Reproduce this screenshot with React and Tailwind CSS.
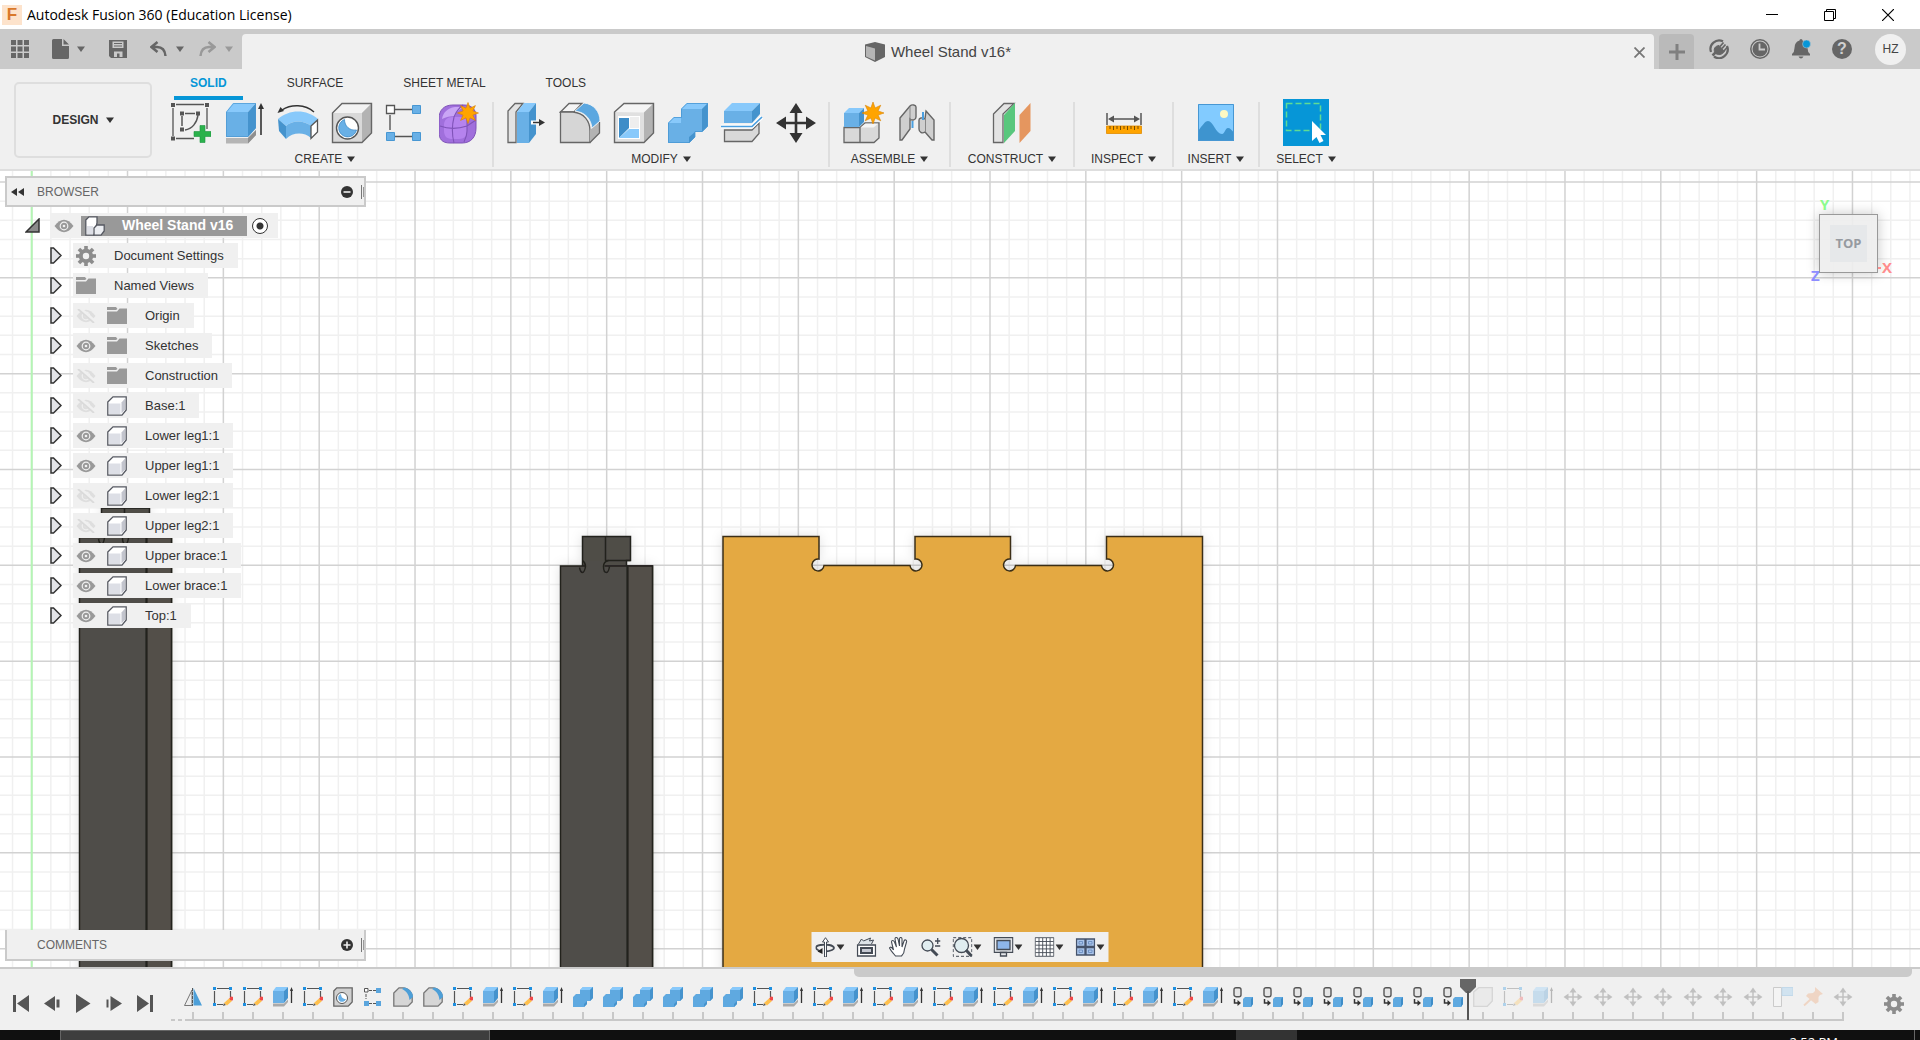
import React from "react";

/* ---------- shared shapes ---------- */

function Caret({ className = "text-[#333]" }) {
  return (
    <svg width="8" height="6" viewBox="0 0 8 6" className={className} aria-hidden="true">
      <path d="M0 0.5h8L4 6z" fill="currentColor" />
    </svg>
  );
}

function Star({ cx, cy, r }) {
  const points = Array.from({ length: 16 }, (_, i) => {
    const a = (i * Math.PI) / 8 - Math.PI / 2;
    const d = i % 2 ? r * 0.5 : r;
    return `${cx + d * Math.cos(a)},${cy + d * Math.sin(a)}`;
  }).join(" ");
  return <polygon points={points} fill="#ffa400" stroke="#d98200" strokeWidth="0.6" />;
}

function Big({ children }) {
  return (
    <svg width="42" height="42" viewBox="0 0 42 42" fill="none" aria-hidden="true">
      {children}
    </svg>
  );
}

/* ---------- ribbon icons ---------- */

const SketchIcon = () => (
  <Big>
    <path d="M4 6v28M7 2.5h28M38 6v21M7 36.5h18" stroke="#555" strokeWidth="1.3" />
    <path d="M13 14v10M16 11.5h10M29 13c-1 8-6 14-13 15" stroke="#555" strokeWidth="1.5" />
    <path d="M2 1h4v4H2zM36 1h4v4h-4zM2 34.5h4v4H2zM11 9.5h4v4h-4zM27 9.5h4v4h-4zM11 25.5h4v4h-4z" fill="#555" />
    <path d="M31 23.5h5v6h6v5h-6v6h-5v-6h-6v-5h6z" fill="#2bb24c" stroke="#1d9440" strokeWidth="0.6" />
  </Big>
);

const ExtrudeIcon = () => (
  <Big>
    <path d="M3 36h22l8-8v5l-8 8.5H3z" fill="#b5b5b5" />
    <path d="M25 36l8-8v5l-8 8.5z" fill="#8f8f8f" />
    <path d="M3 10h22v25H3z" fill="#69b0e6" />
    <path d="M3 10l7-9h23l-8 9z" fill="#88c9fb" />
    <path d="M25 10l8-9v25l-8 9z" fill="#4593cd" />
    <path d="M3.500 10l7-8.500h22V26L25 34.500H3.500z" stroke="#4b97d0" strokeWidth="0.7" />
    <path d="M38 33V6" stroke="#333" strokeWidth="1.6" />
    <path d="M38 1l3 6h-6z" fill="#333" />
  </Big>
);

const RevolveIcon = () => (
  <Big>
    <path d="M5 8C14 2 28 2 37 10" stroke="#333" strokeWidth="1.5" />
    <path d="M0.500 11l3-6 3.500 4z" fill="#333" />
    <path d="M1 17C12 7 30 7 41 17l-7 7C27 18 15 18 9 24z" fill="#88c9fb" />
    <path d="M1 17l8 7v13l-7-8z" fill="#4593cd" />
    <path d="M9 24c6-6 18-6 25 0v12c-7-6-18-6-25 1z" fill="#69b0e6" />
    <path d="M34 24l6.500-6v12L34 36.500z" fill="#fff" stroke="#555" strokeWidth="1.3" />
  </Big>
);

const HoleIcon = () => (
  <Big>
    <path d="M1.500 11L11 1.500h29.500V31L31 40.500H1.500z" fill="#d9d9d9" />
    <path d="M2 11L11 2h29l-9 9z" fill="#f3f3f3" />
    <path d="M31 11l9-9v29l-9 9z" fill="#b3b3b3" />
    <path d="M1.500 11L11 1.500h29.500V31L31 40.500H1.500z" stroke="#666" strokeWidth="1.4" />
    <circle cx="16.5" cy="26" r="11" fill="#fff" stroke="#555" strokeWidth="1.4" />
    <path d="M13.500 17.500a9 9 0 1 0 12 10.500c-7 1-12-4-12-10.500z" fill="#69b0e6" stroke="#3d8ac6" strokeWidth="0.8" />
  </Big>
);

const PatternIcon = () => (
  <Big>
    <path d="M9 7.500h18M5 13v15M9 34.500h18" stroke="#555" strokeWidth="1.4" />
    <path d="M1.500 3.500h8v8h-8z" fill="#fff" stroke="#555" strokeWidth="1.3" />
    <path d="M27.500 3.500h8v8h-8zM1.500 30.500h8v8h-8zM27.500 30.500h8v8h-8z" fill="#69b0e6" stroke="#4797d3" />
  </Big>
);

const FormIcon = () => (
  <Big>
    <path d="M0 17C0 8 5 3 14 3h11c7 0 12 4 12 11v12c0 9-5 15-14 15H11C3 41 0 37 0 30z" fill="#a06fdc" stroke="#7f53b8" />
    <path d="M3 17c1-6 5-11 13-12h9c-6 3-8 6-9 9-5 0-9 1-13 3z" fill="#c9a5f5" />
    <path d="M5 28c0 7 3 9 9 9h6c5 0 8-3 8-8V20c0-4-3-5-7-5h-7c-6 0-9 3-9 8z" fill="#b583ee" />
    <path d="M1 24c8 3 18 3 27 0l9-6M15 15c-2 8-2 18 0 26M28 15v14c0 4-1 7-3 11M15 15c2-5 5-9 9-12" stroke="#7f53b8" strokeWidth="1.1" />
    <Star cx={29} cy={11} r={10.5} />
  </Big>
);

const PressPullIcon = () => (
  <Big>
    <path d="M3 9l7-7.500h8L11 10v30.500H3z" fill="#e3e3e3" stroke="#666" strokeWidth="1.3" />
    <path d="M12 10h12v31H12z" fill="#69b0e6" />
    <path d="M12 10l7-9h12l-7 9z" fill="#88c9fb" />
    <path d="M24 10l7-9v31l-7 9z" fill="#4593cd" />
    <path d="M26 20.500h9" stroke="#fff" strokeWidth="4" />
    <path d="M28 20.500h7" stroke="#333" strokeWidth="1.5" />
    <path d="M40 20.500l-6-3.500v7z" fill="#333" />
  </Big>
);

const FilletIcon = () => (
  <Big>
    <path d="M1.500 10L10 1.500h13L15 10z" fill="#f5f5f5" stroke="#666" strokeWidth="1.3" />
    <path d="M1.500 10H14c11 1 17 9 17 19v11.500H1.500z" fill="#d6d6d6" stroke="#666" strokeWidth="1.3" />
    <path d="M31 28l9.500-8v11L31 40.500z" fill="#b3b3b3" />
    <path d="M40.500 20v11L31 40.500" stroke="#666" strokeWidth="1.3" />
    <path d="M16 9l9-8c10 1 16 9 16 18l-8 7c-1-9-7-16-17-17z" fill="#5ba7e0" stroke="#f5f5f5" strokeWidth="0.8" />
  </Big>
);

const ShellIcon = () => (
  <Big>
    <path d="M1.500 10L11 1.500h29.500V31L31 40.500H1.500z" fill="#e0e0e0" />
    <path d="M2 10l9-8h29l-9 8.500z" fill="#f5f5f5" />
    <path d="M31 10.500L40 2v29l-9 9z" fill="#b3b3b3" />
    <path d="M1.500 10L11 1.500h29.500V31L31 40.500H1.500z" stroke="#666" strokeWidth="1.4" />
    <path d="M5 14h22v23H5z" fill="#fff" />
    <path d="M6 16h10v10L6 36z" fill="#3e8dc8" />
    <path d="M6 36l10-9h10v9z" fill="#88c9fb" />
    <path d="M17 15h9v11h-9z" fill="#eee" />
  </Big>
);

const CombineIcon = () => (
  <Big>
    <path d="M14 7l6-6h21v23l-6 6h-7v5l-6 6H1V21l6-6h7z" fill="#69b0e6" />
    <path d="M14 7l6-6h21l-6 6zM1 21l6-6h7v6z" fill="#88c9fb" />
    <path d="M35 7l6-6v23l-6 6zM22 35l6-5v5l-6 6z" fill="#4593cd" />
    <path d="M14.500 7l5.500-5.500h20.500V24L35 29.500h-7V35l-5.500 5.500h-21V21L7 15.500h7.500z" stroke="#4797d3" strokeWidth="0.8" />
  </Big>
);

const SplitIcon = () => (
  <Big>
    <path d="M3 9h28v12H3z" fill="#69b0e6" />
    <path d="M3 9l8-8h28l-8 8z" fill="#88c9fb" />
    <path d="M31 9l8-8v11l-8 9z" fill="#4593cd" />
    <path d="M3.500 28h27.500l7-7v10.500L31 39.500H3.500z" fill="#d9d9d9" stroke="#666" strokeWidth="1.3" />
    <path d="M0 24.500h31L41 15" stroke="#fff" strokeWidth="4" />
    <path d="M0 24.500h31L41 15" stroke="#4a9fe0" strokeWidth="1.7" />
  </Big>
);

const MoveIcon = () => (
  <Big>
    <path d="M21 8v26M8 21h26" stroke="#333" strokeWidth="2.6" />
    <path d="M21 1l6.500 10h-13zM21 41l6.500-10h-13zM1 21l10-6.500v13zM41 21l-10-6.500v13z" fill="#333" />
  </Big>
);

const NewComponentIcon = () => (
  <Big>
    <path d="M2 25.500h16v15H2zM18 25.500l5-4.500h14v15l-5 4.500H18z" fill="#d9d9d9" stroke="#666" strokeWidth="1.3" />
    <path d="M18.500 25.500l5-4h13l-5 4z" fill="#f5f5f5" />
    <path d="M2 11h15v14H2z" fill="#69b0e6" />
    <path d="M2 11l5-5h15l-5 5z" fill="#88c9fb" />
    <path d="M17 11l5-5v14l-5 5z" fill="#4593cd" />
    <Star cx={31} cy={11} r={11} />
  </Big>
);

const JointIcon = () => (
  <Big>
    <path d="M4 16L14 4c2-2 6-1 6 1v10c0 3-4 4-6 2v10L6 38H4z" fill="#cfcfcf" stroke="#666" strokeWidth="1.4" />
    <path d="M14 5v13" stroke="#888" />
    <path d="M30 9l8 9v20h-2l-7-8c-3 2-6 0-6-3v-9c0-2 3-3 6-1z" fill="#cfcfcf" stroke="#666" strokeWidth="1.4" />
    <path d="M29.500 16v14" stroke="#888" />
    <path d="M16.500 19v7M27 10v8" stroke="#4a9fe0" strokeWidth="2" />
  </Big>
);

const ConstructIcon = () => (
  <Big>
    <path d="M2.500 12L13 1.500h10L12 12v28.500H2.500z" fill="#e3e3e3" stroke="#666" strokeWidth="1.3" />
    <path d="M13 13L24 1v28L13 41z" fill="#59c77d" />
    <path d="M28.500 13l11-12v28l-11 12z" fill="#e5965f" />
  </Big>
);

const InspectIcon = () => (
  <Big>
    <path d="M4 11v12M38 11v12M8 17h26" stroke="#555" strokeWidth="1.5" />
    <path d="M5 17l6-3.500v7zM37 17l-6-3.500v7z" fill="#555" />
    <path d="M3.500 24h35v7.500h-35z" fill="#ffa400" stroke="#e08c00" strokeWidth="0.8" />
    <path d="M7 24v3M10.500 24v4M14 24v3M17.500 24v4M21 24v3M24.500 24v4M28 24v3M31.500 24v4M35 24v3" stroke="#7a4d00" />
  </Big>
);

const InsertIcon = () => (
  <Big>
    <path d="M3 2h36v37H3z" fill="#82cbff" />
    <path d="M3 29c4-5 7-10 10-10 5 0 8 13 14 13 3 0 3-6 6-6 2 0 4 2 6 5v8H3z" fill="#3e94cf" />
    <circle cx="29" cy="12" r="4" fill="#fdf9c3" />
    <path d="M3.500 2.500h35v36h-35z" stroke="#4797d3" />
  </Big>
);

const SelectIcon = () => (
  <Big>
    <path d="M1.500 1.500h34v27h-34z" stroke="#5fdc94" strokeWidth="1.5" strokeDasharray="6 3" />
    <path d="M27 19v20l4.500-4 3 6 4-2-3-6H41z" fill="#fff" />
  </Big>
);

/* ---------- timeline icons ---------- */

const TL = {
  mirror: (
    <>
      <path d="M1.500 18.500L9 3v15.500z" fill="#eee" stroke="#777" />
      <path d="M10.500 1L19 18.500h-8.500z" fill="#4d9fd8" />
      <path d="M9.500 1v18" stroke="#555" strokeDasharray="3 1" />
    </>
  ),
  sketch: (
    <>
      <path d="M4 1.500h12M1.500 4v12M17.500 4v6M4 17.500h6" stroke="#555" strokeWidth="1.2" />
      <path d="M0 0h3v3H0zM16 0h3v3h-3zM0 16h3v3H0z" fill="#1d8fe0" />
      <path d="M10 19l1-3 2 2z" fill="#555" />
      <path d="M11 16l5.500-5 2.500 3-5 4.500z" fill="#ffc04d" />
      <circle cx="18.5" cy="11.5" r="2" fill="#f04848" />
    </>
  ),
  extrude: (
    <>
      <path d="M0 16.500h11l4-4v2.500l-4 4.500H0z" fill="#aaa" />
      <path d="M0 4h11v12H0z" fill="#69b0e6" />
      <path d="M0 4l3-4h12l-4 4z" fill="#88c9fb" />
      <path d="M11 4l4-4v11l-4 5z" fill="#4593cd" />
      <path d="M18.500 16V2" stroke="#333" strokeWidth="1.3" />
      <path d="M18.500 0L20 4h-3z" fill="#333" />
    </>
  ),
  hole: (
    <>
      <path d="M0.800 4l3-3.200h15.400V15l-4 4.200H0.800z" fill="#d0d0d0" stroke="#666" strokeWidth="1.3" />
      <circle cx="9" cy="11" r="5.5" fill="#fff" stroke="#555" />
      <path d="M8 7a4 4 0 1 0 5 5c-3 0-5-2-5-5z" fill="#69b0e6" />
    </>
  ),
  pattern: (
    <>
      <path d="M6 3.500h7M3 7v5M6 16.500h7" stroke="#555" strokeDasharray="3 1" />
      <path d="M1.500 1.500h3.500v3.500H1.500z" fill="#fff" stroke="#555" />
      <path d="M13 1h5v5h-5zM1 14h5v5H1zM13 14h5v5h-5z" fill="#5aa5dd" />
    </>
  ),
  fillet: (
    <>
      <path d="M0.800 6L6 0.800h4C16 1 19.200 6 19.200 10v5L15 19.200H0.800z" fill="#d6d6d6" stroke="#777" strokeWidth="1.3" />
      <path d="M9 2l2-1.500C17 1.500 20 6 20 10l-3.500 3C16 7 13 4 9 2z" fill="#4d9fd8" />
    </>
  ),
  combine: (
    <>
      <path d="M7 3l3-3h10v11l-3 3h-3v3l-3 3H0V10l3-3h4z" fill="#5fa9e0" />
      <path d="M7 3l3-3h10l-3 3z" fill="#88c9fb" />
      <path d="M17 3l3-3v11l-3 3zM11 17l3-3v3l-3 3z" fill="#4593cd" />
    </>
  ),
  component: (
    <>
      <rect x="1" y="0.7" width="7" height="9" rx="2" fill="#e6e6e6" stroke="#555" strokeWidth="1.4" />
      <path d="M1.500 12v4H5" stroke="#333" strokeWidth="1.5" />
      <path d="M8 16l-3.500-3v6z" fill="#333" />
      <path d="M10 12l2-2h8v7l-2 3h-8z" fill="#5fa9e0" />
      <path d="M18 12l2-2v7l-2 3z" fill="#3e8dc8" />
    </>
  ),
  body: (
    <path d="M0.700 5l5-4.300h13.600V14l-5 5.300H0.700z" fill="#dedede" stroke="#999" strokeWidth="1.3" />
  ),
  move: (
    <>
      <path d="M10 3v14M3 10h14" stroke="#555" strokeWidth="1.5" />
      <path d="M10 0.500l3.500 5h-7zM10 19.500l3.500-5h-7zM0.500 10l5-3.500v7zM19.500 10l-5-3.500v7z" fill="#555" />
    </>
  ),
  flag: (
    <>
      <path d="M0.500 0.500h8v19h-8z" fill="#fff" stroke="#777" />
      <path d="M9 0.500h11v8H9z" fill="#8cc8f0" stroke="#5aa5dd" />
    </>
  ),
  pin: (
    <>
      <path d="M1 18.500l7-6.500" stroke="#ee9a61" strokeWidth="2" />
      <path d="M12 0l8 7-3 1-1.500 2 0 5-3 2L3 9l2-2.500 5-0.500 2-2z" fill="#ee9a61" />
    </>
  ),
};

const repeat = (n, ...kinds) => Array.from({ length: n }, () => kinds).flat();

const DONE = [
  "mirror", "sketch", "sketch", "extrude", "sketch", "hole", "pattern", "fillet", "fillet",
  ...repeat(2, "sketch", "extrude"),
  ...repeat(6, "combine"),
  ...repeat(8, "sketch", "extrude"),
  ...repeat(8, "component"),
];
const PENDING = ["body", "sketch", "extrude", ...repeat(7, "move"), "flag", "pin", "move"];

function TimelineItem({ kind, faded }) {
  return (
    <button aria-label={kind} className="flex h-[34px] w-[30px] shrink-0 flex-col items-center gap-[5px]">
      <svg width="20" height="20" viewBox="0 0 20 20" fill="none" className={faded ? "opacity-30" : ""}>
        {TL[kind]}
      </svg>
      <span className="h-[9px] w-[2px] bg-[#c8c8c8]" />
    </button>
  );
}

/* ---------- title bar and document tab ---------- */

function TitleBar() {
  return (
    <header className="flex h-[29px] shrink-0 items-center bg-white pl-[2px]">
      <span className="flex h-5 w-5 items-center justify-center bg-[#fde3cc] text-[17px] font-bold leading-5 text-[#d9782a]">F</span>
      <h1 className="ml-[5px] font-['Open_Sans',sans-serif] text-[14px] text-black">Autodesk Fusion 360 (Education License)</h1>
      <div className="ml-auto flex gap-[8px] pr-[7px]">
        <button aria-label="Minimize" className="flex h-[29px] w-[50px] items-center justify-center">
          <svg width="12" height="12" viewBox="0 0 12 12"><path d="M0 5.500h12" stroke="#000" /></svg>
        </button>
        <button aria-label="Restore" className="flex h-[29px] w-[50px] items-center justify-center">
          <svg width="12" height="12" viewBox="0 0 12 12" fill="none" stroke="#000"><path d="M0.500 2.500h9v9h-9zM2.500 2.500v-2h9v9h-2" /></svg>
        </button>
        <button aria-label="Close" className="flex h-[29px] w-[50px] items-center justify-center">
          <svg width="12" height="12" viewBox="0 0 12 12" stroke="#000" strokeWidth="1.2"><path d="M0 0l12 12M12 0L0 12" /></svg>
        </button>
      </div>
    </header>
  );
}

function TabBar() {
  return (
    <div className="flex h-10 shrink-0 items-stretch bg-[#cacaca] pt-[5px]">
      <div className="flex w-[242px] shrink-0 items-center pb-[5px] pl-[11px] text-[#666]">
        <button aria-label="Data panel">
          <svg width="18" height="18" viewBox="0 0 18 18" fill="currentColor">
            {[0, 6.5, 13].map((y) => [0, 6.5, 13].map((x) => <rect key={`${x}-${y}`} x={x} y={y} width="5" height="5" />))}
          </svg>
        </button>
        <button aria-label="File" className="ml-[23px] flex items-center gap-2">
          <svg width="17" height="20" viewBox="0 0 17 20" fill="currentColor"><path d="M1.500 0H10v7h7v11.500q0 1.500-1.500 1.500h-14Q0 20 0 18.500v-17Q0 0 1.500 0zM11.500 0L17 5.500h-5.500z" /></svg>
          <Caret className="text-[#666]" />
        </button>
        <button aria-label="Save" className="ml-[24px]">
          <svg width="18" height="18" viewBox="0 0 18 18"><path d="M0 0h18v18H2l-2-2z" fill="#666" /><path d="M3.500 1.500h11v6.500h-11zM5 11.500h8.500V17H5z" fill="#cacaca" /><path d="M5 3.500h8M5 6h8" stroke="#666" strokeWidth="1.2" /><path d="M8 13.500h2.500V18H8z" fill="#666" /></svg>
        </button>
        <button aria-label="Undo" className="ml-[23px] flex items-center gap-[9px]">
          <svg width="17" height="16" viewBox="0 0 17 16" fill="none" stroke="currentColor" strokeWidth="2.5"><path d="M7.500 1L1.500 6l6 5M2 6h5c5 0 8 3 8.500 9" /></svg>
          <Caret className="text-[#666]" />
        </button>
        <button aria-label="Redo" className="ml-[15px] flex items-center gap-[9px] text-[#999]">
          <svg width="17" height="16" viewBox="0 0 17 16" fill="none" stroke="currentColor" strokeWidth="2.5"><path d="M9.500 1l6 5-6 5M15 6h-5C5 6 2 9 1.500 15" /></svg>
          <Caret className="text-[#999]" />
        </button>
      </div>
      <div className="flex min-w-0 flex-1 items-center rounded-t-[4px] bg-[#f0f0f0] pr-[9px] pt-[1px]">
        <div className="flex flex-1 items-center justify-center gap-[6px] text-[15px] text-[#444]">
          <svg width="20" height="20" viewBox="0 0 20 20">
            <path d="M0 2.500L10 0l10 2.500V15l-10 5-10-5z" fill="#666" />
            <path d="M1 4l9 2.500v12L1 14.500z" fill="#b5b5b5" />
          </svg>
          <span>Wheel Stand v16*</span>
        </div>
        <button aria-label="Close tab">
          <svg width="11" height="11" viewBox="0 0 11 11" stroke="#777" strokeWidth="1.8"><path d="M0.500 0.500l10 10M10.500 0.500l-10 10" /></svg>
        </button>
      </div>
      <button aria-label="New tab" className="ml-[5px] flex w-[35px] items-center justify-center rounded-t-[4px] bg-[#bababa]">
        <svg width="16" height="16" viewBox="0 0 16 16" stroke="#808080" strokeWidth="3"><path d="M8 0v16M0 8h16" /></svg>
      </button>
      <div className="flex shrink-0 items-center gap-[21px] pb-[5px] pl-[15px] pr-[14px]">
        <button aria-label="Extensions">
          <svg width="20" height="20" viewBox="0 0 20 20" fill="none" stroke="#666">
            <path d="M2 13A8.700 8.700 0 0 1 14 2.300M18 7A8.700 8.700 0 0 1 5 17.500" strokeWidth="2.2" />
            <path d="M3.500 16.500L7 13" strokeWidth="2.5" />
            <path d="M6 14c-2-4 0-7 4-7.500l5.500 6C13 16 9 16.500 6 14z" fill="#666" strokeWidth="1" />
            <path d="M11 7.500l3.500-4M13 9.500l3.500-4M15 12l3.500-4" strokeWidth="1.7" />
          </svg>
        </button>
        <button aria-label="Job status">
          <svg width="20" height="20" viewBox="0 0 20 20" fill="none">
            <circle cx="10" cy="10" r="9.2" stroke="#666" strokeWidth="1.5" />
            <circle cx="10" cy="10" r="7.5" fill="#666" />
            <path d="M9.500 4.500v6H15" stroke="#cacaca" strokeWidth="1.8" />
          </svg>
        </button>
        <button aria-label="Notifications">
          <svg width="20" height="20" viewBox="0 0 20 20">
            <path d="M10 0q1.500 0 1.500 1.500 5 1.500 5 7.500 0 4 2.500 6v1.500H1V15q2.500-2 2.500-6 0-6 5-7.500Q8.500 0 10 0zM7.500 17.500h5Q11.500 19.500 10 19.500 8.500 19.500 7.500 17.500z" fill="#666" />
            <circle cx="15.5" cy="5" r="4" fill="#0696d7" stroke="#cacaca" strokeWidth="0.5" />
          </svg>
        </button>
        <button aria-label="Help" className="flex h-5 w-5 items-center justify-center rounded-full bg-[#666] text-[16px] font-bold leading-5 text-[#d0d0d0]">?</button>
        <button aria-label="Account" className="ml-[2px] h-[31px] w-[31px] rounded-full bg-[#f0f0f0] text-[12px] text-[#444]">HZ</button>
      </div>
    </div>
  );
}

/* ---------- ribbon ---------- */

function Group({ label, icons, width = "" }) {
  return (
    <section className={`flex flex-col items-center border-r-2 border-[#dedede] px-[5px] ${width}`}>
      <div className="flex">
        {icons.map(([name, Icon]) => (
          <button key={name} aria-label={name} className="flex h-[49px] w-[54px] items-start justify-center">
            <Icon />
          </button>
        ))}
      </div>
      <button className="flex items-center gap-[5px] whitespace-nowrap text-[12px] leading-[16px] text-[#333]">
        {label}
        <Caret />
      </button>
    </section>
  );
}

const GROUPS = [
  { label: "CREATE", icons: [["Create sketch", SketchIcon], ["Extrude", ExtrudeIcon], ["Revolve", RevolveIcon], ["Hole", HoleIcon], ["Pattern", PatternIcon], ["Create form", FormIcon]] },
  { label: "MODIFY", icons: [["Press pull", PressPullIcon], ["Fillet", FilletIcon], ["Shell", ShellIcon], ["Combine", CombineIcon], ["Split body", SplitIcon], ["Move", MoveIcon]] },
  { label: "ASSEMBLE", icons: [["New component", NewComponentIcon], ["Joint", JointIcon]], width: "w-[121px]" },
  { label: "CONSTRUCT", icons: [["Offset plane", ConstructIcon]], width: "w-[124px]" },
  { label: "INSPECT", icons: [["Measure", InspectIcon]], width: "w-[99px]" },
  { label: "INSERT", icons: [["Insert image", InsertIcon]], width: "w-[86px]" },
];

function Ribbon() {
  return (
    <div className="flex h-[102px] shrink-0 border-b-2 border-[#dedede] bg-[#f0f0f0] pl-[14px]">
      <button className="mt-[13px] flex h-[76px] w-[138px] shrink-0 items-center justify-center gap-[7px] rounded-[5px] border-2 border-[#dedede] text-[12px] font-bold text-[#333]">
        DESIGN
        <Caret />
      </button>
      <div className="flex flex-col pl-[6px]">
        <nav className="flex gap-[28px] pl-[16px] text-[12px] text-[#333]">
          <button className="h-[31px] border-b-[4px] border-[#0696d7] px-4 font-bold text-[#0696d7]">SOLID</button>
          <button className="h-[27px] px-4">SURFACE</button>
          <button className="h-[27px] px-4">SHEET METAL</button>
          <button className="h-[27px] px-4">TOOLS</button>
        </nav>
        <div className="mt-[2px] flex h-[65px]">
          {GROUPS.map((g) => (
            <Group key={g.label} {...g} />
          ))}
          <section className="flex w-[92px] flex-col items-center">
            <button aria-label="Select" className="-mt-[3px] flex h-[47px] w-[46px] items-center justify-center bg-[#0696d7]">
              <SelectIcon />
            </button>
            <button className="mt-[5px] flex items-center gap-[5px] text-[12px] leading-[16px] text-[#333]">
              SELECT
              <Caret />
            </button>
          </section>
        </div>
      </div>
    </div>
  );
}

/* ---------- modelling canvas ---------- */

const STEP = 95.83;

function gridLines(origin, count) {
  return Array.from({ length: count }, (_, i) => ({ at: origin + (i * STEP) / 5, major: i % 5 === 0 }));
}

function Brace({ x, y, headX }) {
  return (
    <g stroke="#22211e" strokeWidth="1.5">
      <path d={`M${headX} ${y}h48v24h-4v6h-44v-6z`} fill="#4f4d47" />
      <path d={`M${headX + 23} ${y}v24h25`} fill="none" />
      <path d={`M${x} ${y + 29.5}h92V1400h-92z`} fill="#504e48" />
      <path d={`M${x + 67} ${y + 29.5}h25V1400h-25z`} fill="#534f49" />
      <path d={`M${headX + 3} ${y + 24}h19v14h-19z`} fill="#504e48" stroke="none" />
      <path d={`M${headX} ${y + 24}q3 2 3 6q-1 6-3 6q-2 0-3-5M${headX + 26} ${y + 24}q-5 1-5 6 0 6 3 6 2 0 3-6`} fill="none" />
      <path d={`M${x + 67} ${y + 30}V1400`} strokeWidth="2" />
    </g>
  );
}

function Scene() {
  const notch = (x) => `V559A6 6 0 1 0 ${x + 5} 565.500H${x + 91}A6 6 0 1 0 ${x + 96} 559V536.500`;
  return (
    <svg className="absolute inset-0 h-full w-full" aria-label="Model view">
      <defs>
        <filter id="soft" x="-10%" y="-10%" width="120%" height="120%">
          <feDropShadow dx="0" dy="0" stdDeviation="6" floodColor="#000" floodOpacity="0.12" />
        </filter>
      </defs>
      <rect width="100%" height="100%" fill="#fff" />
      <g transform="translate(0 -171)">
        {[false, true].map((major) => (
          <g key={String(major)} stroke={major ? "#d2d2d2" : "#f0f0f0"} strokeWidth="1.5">
            {gridLines(-64.13, 140).filter((l) => l.major === major).map((l) => <line key={`v${l.at}`} x1={l.at} x2={l.at} y1="171" y2="1500" />)}
            {gridLines(86.17, 80).filter((l) => l.major === major).map((l) => <line key={`h${l.at}`} y1={l.at} y2={l.at} x1="0" x2="2700" />)}
          </g>
        ))}
        <path d="M31.700 171V1500" stroke="#b4f5b4" strokeWidth="2" />
        <g filter="url(#soft)">
          <Brace x={79.5} y={508} headX={101.5} />
          <Brace x={560.5} y={536.5} headX={582.5} />
          <path
            d={`M723 1400V536.500H819${notch(819)}H1010.500${notch(1010.5)}H1202.500V1400z`}
            fill="#e4a943"
            stroke="#3a2f18"
            strokeWidth="1.5"
          />
        </g>
      </g>
    </svg>
  );
}

function Eye({ off }) {
  return (
    <svg width="20" height="14" viewBox="0 0 20 14" fill="none">
      <path d="M0.500 7Q10-5.500 19.500 7 10 19.500 0.500 7z" fill={off ? "#dedede" : "#999"} />
      <circle cx="10" cy="7" r="3.8" stroke="#f0f0f0" strokeWidth="1.2" />
      <circle cx="10" cy="7" r="1.3" fill="#f0f0f0" />
      {off && (
        <>
          <path d="M4 0l16 14" stroke="#f0f0f0" strokeWidth="4" />
          <path d="M2 0l16 14" stroke="#dadada" strokeWidth="1.8" />
        </>
      )}
    </svg>
  );
}

const Folder = () => (
  <svg width="20" height="17" viewBox="0 0 20 17"><path d="M0 0h9l1.500 2L9 3H0zM0 4.500h10L12.500 1.500H20V17H0z" fill="#999" /></svg>
);

const Cog = ({ color = "#8c8c8c" }) => (
  <svg width="20" height="20" viewBox="0 0 20 20" fill="none">
    <circle cx="10" cy="10" r="5.2" stroke={color} strokeWidth="4" />
    {Array.from({ length: 8 }, (_, i) => (
      <rect key={i} x="8.2" y="0" width="3.6" height="4.5" fill={color} transform={`rotate(${i * 45} 10 10)`} />
    ))}
  </svg>
);

const Cube = () => (
  <svg width="20" height="20" viewBox="0 0 20 20">
    <path d="M0.800 6L6 0.800h13.200V14L15 19.200H0.800z" fill="#fff" stroke="#555861" strokeWidth="1.3" />
    <path d="M2 7.500h11.500V18H2z" fill="#dddfe6" />
    <path d="M14.500 6.500L18 2.500v11l-3.500 4z" fill="#c2c4cd" />
  </svg>
);

const TREE = [
  { name: "Document Settings", icon: Cog },
  { name: "Named Views", icon: Folder },
  { name: "Origin", icon: Folder, eye: "off" },
  { name: "Sketches", icon: Folder, eye: "on" },
  { name: "Construction", icon: Folder, eye: "off" },
  { name: "Base:1", icon: Cube, eye: "off" },
  { name: "Lower leg1:1", icon: Cube, eye: "on" },
  { name: "Upper leg1:1", icon: Cube, eye: "on" },
  { name: "Lower leg2:1", icon: Cube, eye: "off" },
  { name: "Upper leg2:1", icon: Cube, eye: "off" },
  { name: "Upper brace:1", icon: Cube, eye: "on" },
  { name: "Lower brace:1", icon: Cube, eye: "on" },
  { name: "Top:1", icon: Cube, eye: "on" },
];

function Tree() {
  return (
    <ul className="mt-[6px] flex flex-col gap-[5px] text-[13px] text-[#333]">
      <li className="flex h-[25px] items-center pl-[25px]">
        <button aria-label="Collapse">
          <svg width="15" height="15" viewBox="0 0 15 15"><path d="M1 14L14 1v13z" fill="#8a8a8a" stroke="#333" strokeWidth="1.5" /></svg>
        </button>
        <div className="ml-[10px] flex h-[25px] items-center bg-[#f0f0f0] pr-[10px]">
          <button aria-label="Toggle visibility" className="w-[31px] pl-1"><Eye /></button>
          <button className="flex h-5 items-center whitespace-nowrap bg-[#999] pl-1 pr-[14px] text-[14px] font-bold text-white">
            <svg width="20" height="20" viewBox="0 0 20 20" className="mr-[17px]">
              <path d="M0.800 4L4 0.800h8V7l-3 12.200H0.800z" fill="#fff" stroke="#555861" strokeWidth="1.3" />
              <path d="M9 12l3-3h7.200v6L16 19.200H9z" fill="#eceef2" stroke="#555861" strokeWidth="1.3" />
              <path d="M2 10h6v8H2z" fill="#dddfe6" />
            </svg>
            Wheel Stand v16
          </button>
          <label className="ml-[5px] flex">
            <input type="radio" name="active" defaultChecked aria-label="Activate Wheel Stand v16" className="h-4 w-4 appearance-none rounded-full border border-[#333] bg-[radial-gradient(circle,#333_0_3px,#fff_4px)]" />
          </label>
        </div>
      </li>
      {TREE.map(({ name, icon: Icon, eye }) => (
        <li key={name} className="flex h-[25px] items-center pl-[50px]">
          <button aria-label={`Expand ${name}`} className="w-[23px] shrink-0">
            <svg width="12" height="17" viewBox="0 0 12 17"><path d="M1 1h2.500L11 8.500 3.500 16H1z" fill="#e3e4e8" stroke="#333" strokeWidth="1.5" /></svg>
          </button>
          <div className="flex h-[25px] items-center bg-[#f0f0f0] pl-[3px] pr-[14px]">
            {eye && (
              <button aria-label={`Toggle ${name}`} className="mr-[11px]"><Eye off={eye === "off"} /></button>
            )}
            <Icon />
            <span className="ml-[18px] whitespace-nowrap">{name}</span>
          </div>
        </li>
      ))}
    </ul>
  );
}

function PanelEnd({ plus }) {
  return (
    <span className="ml-auto flex items-center gap-[8px]">
      <button aria-label={plus ? "Add comment" : "Hide browser"}>
        <svg width="12" height="12" viewBox="0 0 12 12"><circle cx="6" cy="6" r="6" fill="#333" /><path d={plus ? "M2.500 6h7M6 2.500v7" : "M2.500 6h7"} stroke="#f0f0f0" strokeWidth="1.6" /></svg>
      </button>
      <span className="flex items-center gap-px">
        <span className="h-[14px] w-px bg-[#777]" />
        <span className="h-[10px] w-px bg-[#999]" />
      </span>
    </span>
  );
}

function NavBar() {
  const svg = (children) => (
    <svg width="20" height="20" viewBox="0 0 20 20" fill="none" stroke="#444b55" strokeWidth="1.3">{children}</svg>
  );
  const items = [
    ["Orbit", true, svg(<><path d="M5 14C-1 12-1 9 5 8c6-1 13 0 13.500 3 0 2-4 3-9 3.500" strokeWidth="1.8" /><path d="M9 20V5H7L10 0.700 13 5h-2v15z" fill="#fff" strokeWidth="1" /><path d="M2 14.500l5-3.500v6z" fill="#222" stroke="none" /></>)],
    ["Look at", false, svg(<><path d="M1 8h18v11H1z" fill="#fff" /><path d="M4.500 11h11v5h-11z" fill="#c6c9d2" strokeWidth="2" /><path d="M2 7l3-5 2 2 7-3-1 3 4-1-2 4" fill="#dde3e8" strokeWidth="1" /></>)],
    ["Pan", false, svg(<path d="M7 19c-2-3-4-4-6-8 1-2 3 0 4 2L3 5c0-2 2-2 3 0l2 5L6.500 2c0-2 2-2 3 0L11 9l0-7c0-2 2.500-2 2.500 0l0 8 2-6c1-2 3-1 2.500 1l-2 7c0 3-1 5-3 7z" fill="#fff" strokeWidth="1.100" />)],
    ["Zoom", false, svg(<><circle cx="7" cy="8.500" r="5.500" fill="#e0edf0" /><path d="M11 12.500l6 6" strokeWidth="3" /><path d="M14.500 4h5.500M17.200 1v6M14.500 9h5.500" /></>)],
    ["Fit", true, svg(<><path d="M0.700 0.700h18.600v18.600H0.700z" strokeDasharray="3 2" strokeWidth="1" /><circle cx="9" cy="8.500" r="7" fill="#e0edf0" /><path d="M13.500 13l5.500 6" strokeWidth="3" /></>)],
    ["Display settings", true, svg(<><path d="M0.700 0.700h18.600v14.600H0.700z" fill="#e6e8ec" /><path d="M3.500 3.500h13v9h-13z" fill="#8db6ea" /><path d="M7 15.500h6v3.500H7z" fill="#e6e8ec" /></>)],
    ["Grid and snaps", true, svg(<path d="M0.700 0.700h18.600v18.600H0.700zM4.500 1v18M8.200 1v18M11.900 1v18M15.600 1v18M1 4.500h18M1 8.200h18M1 11.900h18M1 15.600h18" fill="#fff" strokeWidth="0.900" />)],
    ["Viewports", true, svg(<><path d="M1 2h8.500v7.500H1zM10.500 2H19v7.500h-8.500zM1 10.500h8.500V18H1zM10.500 10.500H19V18h-8.500z" fill="#a9c4ea" stroke="#46536b" /><path d="M3.500 4.500h3.500v2.500H3.500zM13 4.500h3.500v2.500H13zM3.500 13h3.500v2.500H3.500zM13 13h3.500v2.500H13z" stroke="#6588bb" strokeWidth="0.800" /></>)],
  ];
  return (
    <div className="absolute bottom-[5px] left-1/2 flex h-[30px] -translate-x-1/2 items-center gap-[12px] bg-[#f0f0f0] px-[4px]">
      {items.map(([name, caret, icon]) => (
        <button key={name} aria-label={name} className="flex items-center gap-px">
          {icon}
          {caret && <Caret />}
        </button>
      ))}
    </div>
  );
}

function ViewCube() {
  return (
    <div className="absolute right-[42px] top-[43px] flex h-[59px] w-[59px] items-center justify-center border border-[#999] bg-[#ededed]/90 shadow-[0_0_12px_rgba(0,0,0,0.22)]">
      <button className="h-[37px] w-[37px] bg-[#e6e8ea] font-['Open_Sans',sans-serif] text-[13px] font-bold text-[#969aa0]">TOP</button>
      <span className="absolute -top-[21px] left-0 font-['Open_Sans',sans-serif] text-[15px] font-bold leading-[20px] text-[#8dfb8d]">Y</span>
      <span className="absolute -bottom-[5px] -right-[15px] font-['Open_Sans',sans-serif] text-[15px] font-bold leading-[20px] text-[#ff8d8d]">X</span>
      <span className="absolute -right-[4px] bottom-[3px] h-[2px] w-[3px] bg-[#ff8d8d]" />
      <span className="absolute -bottom-[13px] -left-[9px] font-['Open_Sans',sans-serif] text-[15px] font-bold leading-[20px] text-[#8d8dff]">Z</span>
    </div>
  );
}

function Canvas() {
  return (
    <main className="relative flex min-h-0 flex-1 flex-col overflow-hidden bg-white">
      <Scene />
      <div className="relative flex flex-1 flex-col items-start pb-[6px] pl-[5px] pt-[5px]">
        <div className="flex h-[31px] w-[361px] items-center border-2 border-[#cacaca] bg-[#f0f0f0] pl-[4px] text-[12px] text-[#666]">
          <button aria-label="Collapse panel">
            <svg width="13" height="8" viewBox="0 0 13 8" fill="#333"><path d="M6 0v8L0 4zM13 0v8L7 4z" /></svg>
          </button>
          <h2 className="ml-[13px]">BROWSER</h2>
          <PanelEnd />
        </div>
        <div className="-ml-[5px]"><Tree /></div>
        <div className="mt-auto flex h-[31px] w-[361px] items-center border-b-2 border-l-2 border-r-2 border-[#cacaca] bg-[#f0f0f0] pl-[30px] text-[12px] text-[#666]">
          <h2>COMMENTS</h2>
          <PanelEnd plus />
        </div>
      </div>
      <NavBar />
      <ViewCube />
    </main>
  );
}

/* ---------- timeline ---------- */

const PLAYBACK = [
  ["Go to start", "M0 0h3v17H0zM16 0v17L4 8.500z"],
  ["Step back", "M0 8.500L11 1v15zM12.500 4.500h3v8h-3z"],
  ["Play", "M1 -1L15.500 8.500 1 18z"],
  ["Step forward", "M0.500 4.500h2v8h-2zM4.500 1L16 8.500 4.500 16z"],
  ["Go to end", "M0 0l12 8.500L0 17zM13 0h3v17h-3z"],
];

function Timeline() {
  return (
    <footer className="flex h-[63px] shrink-0 flex-col border-t-2 border-[#cacaca] bg-[#f0f0f0]">
      <div className="ml-[44.5%] mr-2 h-[8px] rounded-b-[5px] bg-[#cacaca]" />
      <div className="flex min-w-0 flex-1 items-start">
        <div className="flex gap-[15px] pl-[13px] pt-[18px]">
          {PLAYBACK.map(([name, d]) => (
            <button key={name} aria-label={name}>
              <svg width="16" height="17" viewBox="0 0 16 17" overflow="visible"><path d={d} fill="#555" /></svg>
            </button>
          ))}
        </div>
        <div className="ml-[18px] pt-[10px]">
          <div className="flex pl-[7px]">
            {DONE.map((kind, i) => <TimelineItem key={i} kind={kind} />)}
            <div className="relative w-0">
              <svg width="16" height="41" viewBox="0 0 16 41" className="absolute -left-2 -top-[8px] max-w-none">
                <path d="M0 0h16v8l-6 6H6L0 8z" fill="#666" />
                <path d="M8 12v29" stroke="#555" strokeWidth="2" />
              </svg>
            </div>
            {PENDING.map((kind, i) => <TimelineItem key={i} kind={kind} faded />)}
          </div>
          <div className="-mt-[2px] flex gap-[3px] pr-[14px]">
            <span className="h-[2px] w-[4px] bg-[#c8c8c8]" />
            <span className="h-[2px] w-[4px] bg-[#c8c8c8]" />
            <span className="h-[2px] flex-1 bg-[#c8c8c8]" />
          </div>
        </div>
        <button aria-label="Timeline settings" className="ml-auto mr-4 pt-[17px]"><Cog /></button>
      </div>
    </footer>
  );
}

function Taskbar() {
  return (
    <div className="flex h-[10px] shrink-0 items-start overflow-hidden bg-[#101010] pl-[60px]">
      <span className="h-[12px] w-[430px] border border-[#666] bg-[#3e3e3e]" />
      <span className="ml-[746px] h-[12px] w-[61px] bg-[#333]" />
      <time className="ml-auto mr-[76px] pt-[3px] font-['Open_Sans',sans-serif] text-[13px] leading-[18px] text-white">2:52 PM</time>
      <span className="mr-[5px] h-[12px] w-px bg-[#666]" />
    </div>
  );
}

export default function App() {
  return (
    <div className="flex h-screen flex-col overflow-hidden bg-[#f0f0f0] font-['Liberation_Sans',Arial,sans-serif]">
      <TitleBar />
      <TabBar />
      <Ribbon />
      <Canvas />
      <Timeline />
      <Taskbar />
    </div>
  );
}
